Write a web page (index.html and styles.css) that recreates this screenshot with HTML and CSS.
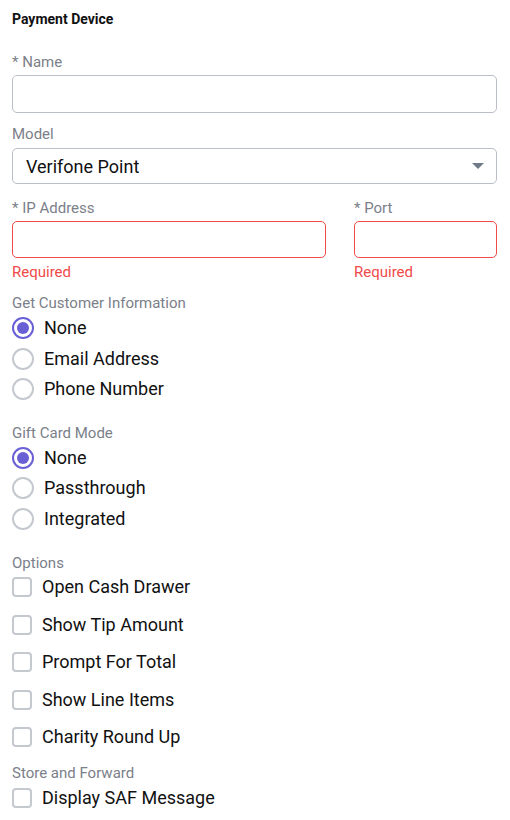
FILE: index.html
```html
<!DOCTYPE html>
<html>
<head>
<meta charset="utf-8">
<link rel="stylesheet" href="styles.css">
</head>
<body>
<form class="form">
  <h1 class="title">Payment Device</h1>

  <div class="field field-name">
    <label class="label">* Name</label>
    <div class="input"></div>
  </div>

  <div class="field field-model">
    <label class="label">Model</label>
    <div class="input select">
      <span class="select-value">Verifone Point</span>
      <span class="caret"></span>
    </div>
  </div>

  <div class="row-2">
    <div class="field">
      <label class="label">* IP Address</label>
      <div class="input error"></div>
      <div class="error-text">Required</div>
    </div>
    <div class="field">
      <label class="label">* Port</label>
      <div class="input error"></div>
      <div class="error-text">Required</div>
    </div>
  </div>

  <div class="group">
    <div class="label">Get Customer Information</div>
    <div class="radio-row"><span class="radio checked"></span><span class="opt">None</span></div>
    <div class="radio-row"><span class="radio"></span><span class="opt">Email Address</span></div>
    <div class="radio-row"><span class="radio"></span><span class="opt">Phone Number</span></div>
  </div>

  <div class="group group-gift">
    <div class="label">Gift Card Mode</div>
    <div class="radio-row"><span class="radio checked"></span><span class="opt">None</span></div>
    <div class="radio-row"><span class="radio"></span><span class="opt">Passthrough</span></div>
    <div class="radio-row"><span class="radio"></span><span class="opt">Integrated</span></div>
  </div>

  <div class="group group-options">
    <div class="label">Options</div>
    <div class="checks">
      <div class="check-row"><span class="checkbox"></span><span class="opt">Open Cash Drawer</span></div>
      <div class="check-row"><span class="checkbox"></span><span class="opt">Show Tip Amount</span></div>
      <div class="check-row"><span class="checkbox"></span><span class="opt">Prompt For Total</span></div>
      <div class="check-row"><span class="checkbox"></span><span class="opt">Show Line Items</span></div>
      <div class="check-row"><span class="checkbox"></span><span class="opt">Charity Round Up</span></div>
    </div>
  </div>

  <div class="group group-saf">
    <div class="label">Store and Forward</div>
    <div class="check-row"><span class="checkbox"></span><span class="opt">Display SAF Message</span></div>
  </div>
</form>
</body>
</html>
```

FILE: styles.css
```css
html, body {
  margin: 0;
  padding: 0;
  background: #ffffff;
}

body {
  font-family: Roboto, "Liberation Sans", Arial, sans-serif;
  color: #111111;
}

.form {
  padding: 10px 13px 0 12px;
  display: flex;
  flex-direction: column;
}

.title {
  margin: 0;
  font-size: 14px;
  font-weight: 700;
  line-height: 18px;
  color: #111;
}

.label {
  display: block;
  font-size: 15px;
  line-height: 20px;
  color: #7b8089;
}

.field-name {
  margin-top: 24px;
}

.field-name .input {
  margin-top: 3px;
  height: 36px;
}

.field-model {
  margin-top: 11px;
}

.field-model .input {
  margin-top: 4px;
  height: 34px;
}

.input {
  box-sizing: content-box;
  border: 1px solid #b9bec7;
  border-radius: 5px;
  height: 35px;
  background: #fff;
}

.input.error {
  border-color: #f04a4a;
  margin-top: 3px;
}

.select {
  display: flex;
  align-items: center;
  justify-content: space-between;
  padding: 0 12px 0 13px;
}

.select-value {
  font-size: 18px;
  color: #111;
}

.caret {
  width: 0;
  height: 0;
  border-left: 6px solid transparent;
  border-right: 6px solid transparent;
  border-top: 6px solid #6f7b87;
}

.row-2 {
  margin-top: 14px;
  display: grid;
  grid-template-columns: 314px 143px;
  column-gap: 28px;
}

.error-text {
  font-size: 15px;
  line-height: 20px;
  margin-top: 4px;
  color: #f04a4a;
}

.group {
  margin-top: 11px;
  display: flex;
  flex-direction: column;
}

.group-gift {
  margin-top: 18px;
}

.group-options {
  margin-top: 19px;
}

.group-saf {
  margin-top: 11px;
}

.radio-row {
  display: flex;
  align-items: center;
  height: 30.5px;
}

.radio {
  box-sizing: border-box;
  width: 22px;
  height: 22px;
  border: 2px solid #c4c8cf;
  border-radius: 50%;
  margin-right: 10px;
  position: relative;
  flex: none;
}

.radio.checked {
  border-color: #6a60d6;
}

.radio.checked::after {
  content: "";
  position: absolute;
  left: 3px;
  top: 3px;
  width: 12px;
  height: 12px;
  border-radius: 50%;
  background: #6a60d6;
}

.opt {
  font-size: 18px;
  line-height: 20px;
  color: #111;
}

.checks {
  display: flex;
  flex-direction: column;
  gap: 7.5px;
  margin-top: -1px;
}

.check-row {
  display: flex;
  align-items: center;
  height: 30px;
}

.checkbox {
  box-sizing: border-box;
  width: 20px;
  height: 20px;
  border: 2px solid #c4c8cf;
  border-radius: 4px;
  margin-right: 10px;
  flex: none;
}
```
